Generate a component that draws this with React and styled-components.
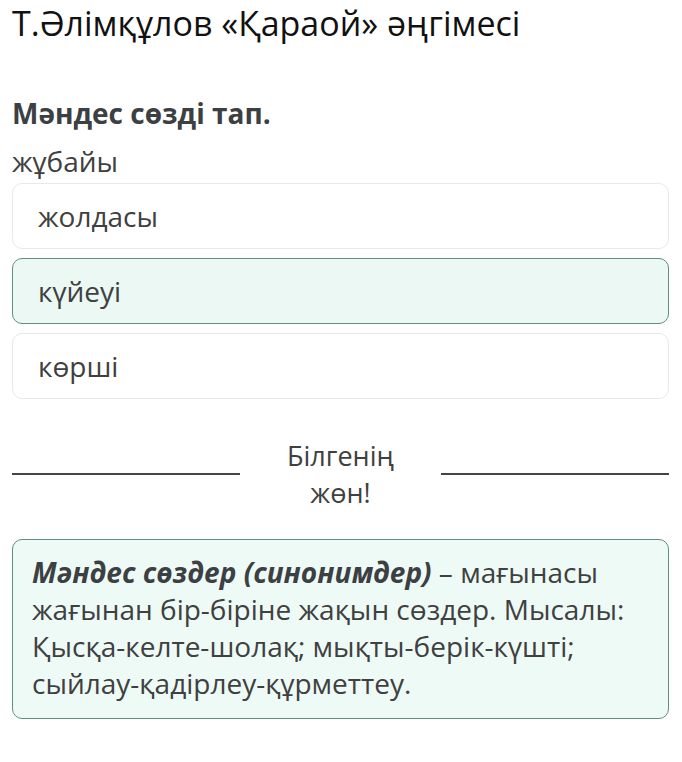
import React from "react";
import styled, { createGlobalStyle } from "styled-components";

const Global = createGlobalStyle`
  html, body { margin: 0; padding: 0; background: #fff; }
  body { font-family: "Open Sans", "Noto Sans", sans-serif; }
`;

const Page = styled.div`
  width: 682px;
  height: 762px;
  box-sizing: border-box;
  padding: 0 13px 0 12px;
  display: flex;
  flex-direction: column;
  font-family: "Open Sans", "Noto Sans", sans-serif;
  overflow: hidden;
`;

const Title = styled.h1`
  margin: 0;
  padding-top: 1px;
  font-size: 34px;
  font-weight: 400;
  line-height: 44px;
  color: #111;
`;

const Question = styled.div`
  margin-top: 50px;
  font-size: 28px;
  font-weight: 700;
  line-height: 36px;
  color: #3c4043;
`;

const Word = styled.div`
  margin-top: 13px;
  font-size: 28px;
  line-height: 34px;
  color: #404040;
`;

const Options = styled.div`
  margin-top: 5px;
  display: flex;
  flex-direction: column;
  gap: 9px;
`;

const Option = styled.div`
  height: 66px;
  box-sizing: border-box;
  border-radius: 10px;
  border: 1px solid ${(p) => (p.$selected ? "#5f8f84" : "#e8e8e8")};
  background: ${(p) => (p.$selected ? "#ebf8f4" : "#fff")};
  display: flex;
  align-items: center;
  padding-left: 25px;
  font-size: 28px;
  color: #404040;
`;

const Divider = styled.div`
  margin-top: 38px;
  display: grid;
  grid-template-columns: 228px 1fr 228px;
  align-items: center;
`;

const Line = styled.div`
  height: 2px;
  background: #444;
`;

const DividerText = styled.div`
  text-align: center;
  font-size: 27px;
  line-height: 37px;
  color: #404040;
`;

const Info = styled.div`
  margin-top: 28px;
  box-sizing: border-box;
  border: 1px solid #5f8f84;
  border-radius: 10px;
  background: #eefaf6;
  padding: 14px 22px 16px 19px;
  font-size: 28px;
  line-height: 37px;
  color: #404040;
`;

const Term = styled.b`
  font-style: italic;
  font-weight: 700;
  color: #3c4043;
`;

export default function App() {
  return (
    <>
      <Global />
      <Page>
        <Title>Т.Әлімқұлов «Қараой» әңгімесі</Title>
        <Question>Мәндес сөзді тап.</Question>
        <Word>жұбайы</Word>
        <Options>
          <Option>жолдасы</Option>
          <Option $selected>күйеуі</Option>
          <Option>көрші</Option>
        </Options>
        <Divider>
          <Line />
          <DividerText>
            Білгенің
            <br />
            жөн!
          </DividerText>
          <Line />
        </Divider>
        <Info>
          <Term>Мәндес сөздер (синонимдер)</Term> – мағынасы жағынан бір-біріне
          жақын сөздер. Мысалы: Қысқа-келте-шолақ; мықты-берік-күшті;
          сыйлау-қадірлеу-құрметтеу.
        </Info>
      </Page>
    </>
  );
}
